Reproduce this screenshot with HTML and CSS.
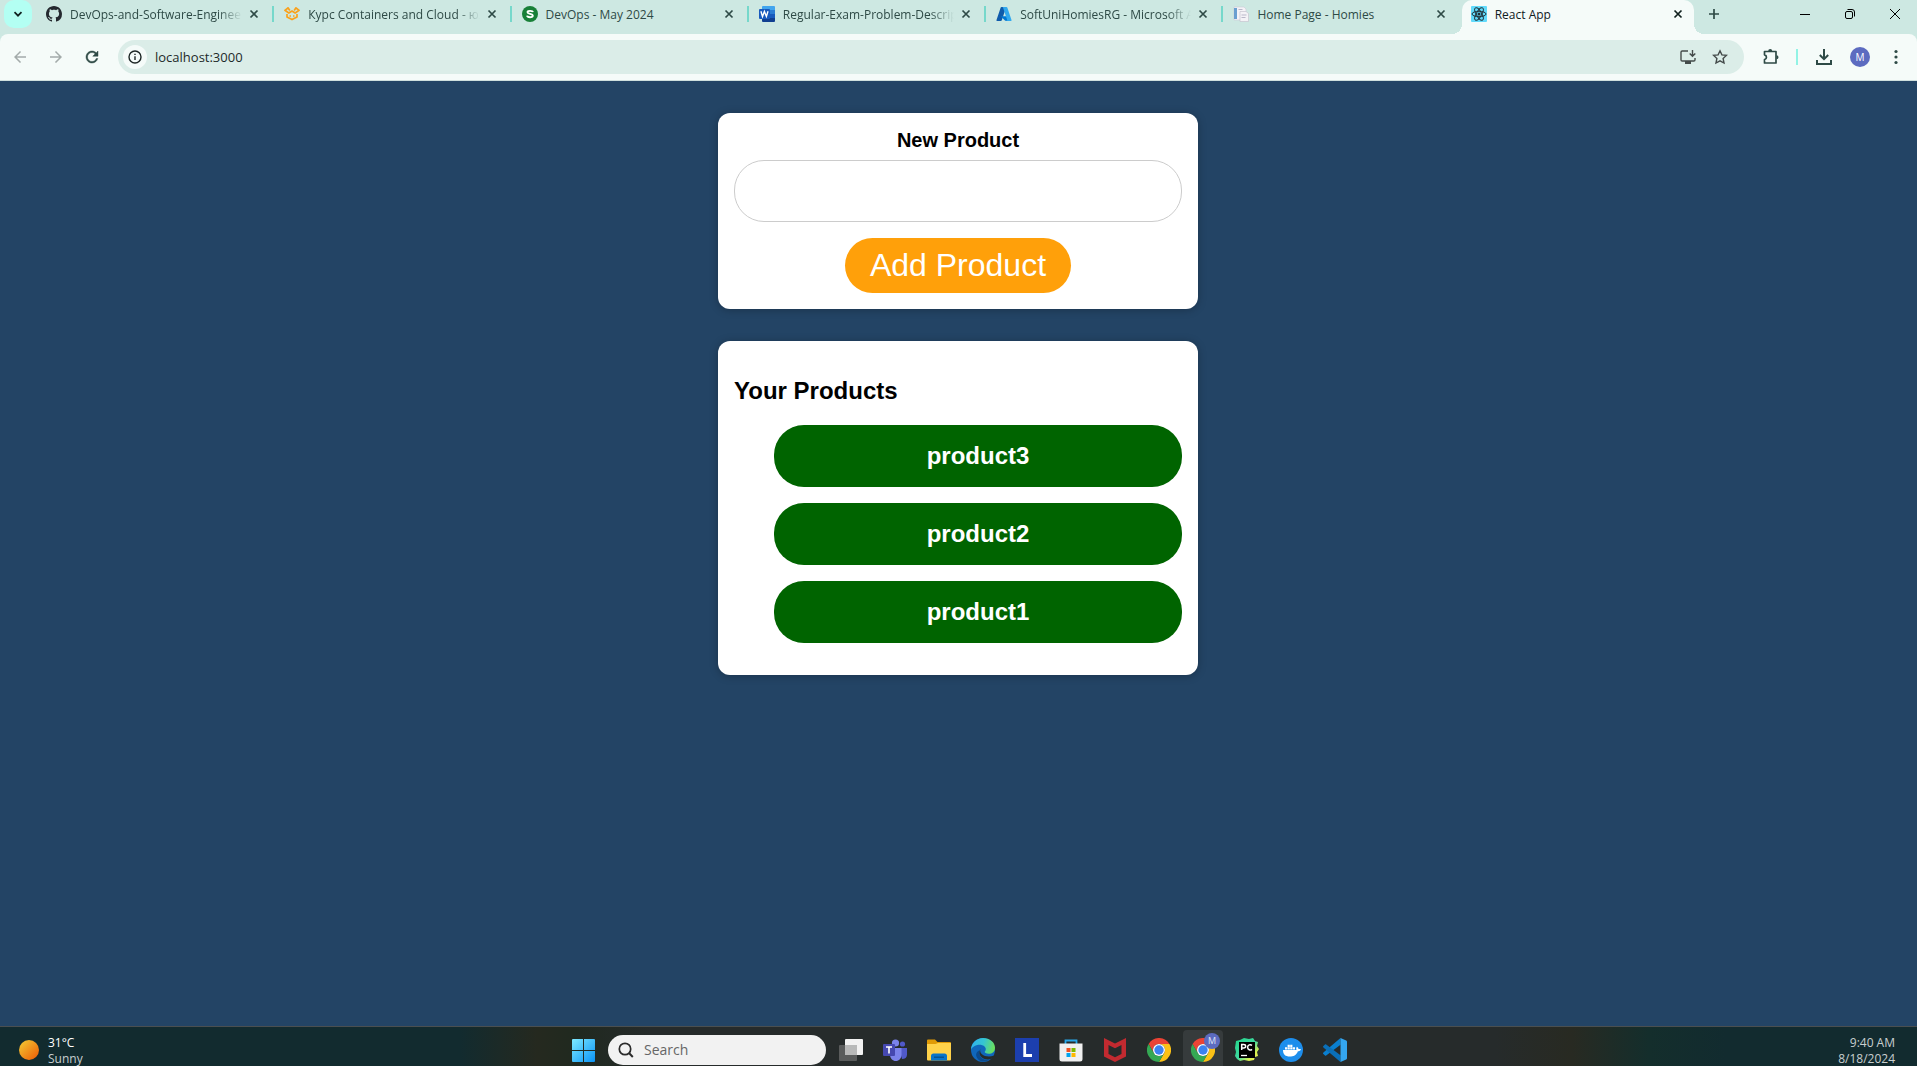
FILE: index.html
```html
<!DOCTYPE html>
<html lang="en">
<head>
<meta charset="utf-8">
<title>React App</title>
<link rel="stylesheet" href="styles.css">
</head>
<body>
<header class="browser">
  <div class="tabstrip">
    <button class="tab-search" aria-label="Search tabs"><svg width="12" height="12" viewBox="0 0 12 12"><path class="line bold" d="M2.500 4.200 6 7.700 9.500 4.200"/></svg></button>
    <nav class="tabs" aria-label="Tabs">
      <div class="tab">
        <button class="tab-main"><svg class="favicon" viewBox="0 0 16 16"><path fill="#24292f" d="M8 0C3.580 0 0 3.580 0 8c0 3.540 2.290 6.530 5.470 7.590.4.070.55-.17.55-.38 0-.19-.01-.82-.01-1.490-2.010.37-2.530-.49-2.690-.94-.09-.23-.48-.94-.82-1.130-.28-.15-.68-.52-.01-.53.63-.01 1.080.58 1.230.82.72 1.210 1.870.87 2.330.66.07-.52.28-.87.51-1.070-1.780-.2-3.640-.89-3.640-3.950 0-.87.31-1.590.82-2.150-.08-.2-.36-1.020.08-2.120 0 0 .67-.21 2.200.82.64-.18 1.320-.27 2-.27s1.360.09 2 .27c1.530-1.040 2.200-.82 2.200-.82.44 1.100.16 1.920.08 2.120.51.56.82 1.270.82 2.150 0 3.070-1.870 3.750-3.650 3.950.29.25.54.73.54 1.480 0 1.070-.01 1.930-.01 2.200 0 .21.15.46.55.38A8.010 8.010 0 0 0 16 8c0-4.420-3.580-8-8-8z"/></svg><span class="tab-title fade">DevOps-and-Software-Engineer</span></button>
        <button class="tab-close" aria-label="Close tab"><svg width="10" height="10" viewBox="0 0 10 10"><path class="line bold" d="M1.500 1.500l7 7m0-7l-7 7"/></svg></button>
      </div>
      <div class="tab">
        <button class="tab-main"><svg class="favicon" viewBox="0 0 16 16"><path fill="none" stroke="#f9a11b" stroke-width="1.700" stroke-linejoin="round" d="M5.800 4.500 4 1.800.9 4.300 4.800 7 8 5l3.200 2 3.900-2.700L12 1.800l-1.800 2.700M3 8v3L8 13.600 13 11V8M5.500 10h1.500M9 10h1.500"/></svg><span class="tab-title fade">Курс Containers and Cloud - юл</span></button>
        <button class="tab-close" aria-label="Close tab"><svg width="10" height="10" viewBox="0 0 10 10"><path class="line bold" d="M1.500 1.500l7 7m0-7l-7 7"/></svg></button>
      </div>
      <div class="tab">
        <button class="tab-main"><svg class="favicon" viewBox="0 0 16 16"><circle cx="8" cy="8" r="8" fill="#188038"/><path fill="none" stroke="#fff" stroke-width="1.900" d="M10.900 6.200C10.600 4.400 5.400 4.300 5.500 6.300c.1 2.100 5.300 1.200 5.300 3.500 0 2-5.400 2-5.700-.1"/></svg><span class="tab-title">DevOps - May 2024</span></button>
        <button class="tab-close" aria-label="Close tab"><svg width="10" height="10" viewBox="0 0 10 10"><path class="line bold" d="M1.500 1.500l7 7m0-7l-7 7"/></svg></button>
      </div>
      <div class="tab">
        <button class="tab-main"><svg class="favicon" viewBox="0 0 16 16"><path fill="#41a5ee" d="M4 0h11a1 1 0 0 1 1 1v3H3V1a1 1 0 0 1 1-1z"/><path fill="#2b7cd3" d="M3 4h13v4H3z"/><path fill="#185abd" d="M3 8h13v4H3z"/><path fill="#103f91" d="M3 12h13v3a1 1 0 0 1-1 1H4a1 1 0 0 1-1-1z"/><rect y="3" width="11" height="10" rx="1" fill="#185abd"/><path fill="none" stroke="#fff" stroke-width="1.400" d="M1.900 5.200 3.500 10.500 5.400 5.500 7.400 10.500 9 5.200"/></svg><span class="tab-title fade">Regular-Exam-Problem-Descrip</span></button>
        <button class="tab-close" aria-label="Close tab"><svg width="10" height="10" viewBox="0 0 10 10"><path class="line bold" d="M1.500 1.500l7 7m0-7l-7 7"/></svg></button>
      </div>
      <div class="tab">
        <button class="tab-main"><svg class="favicon" viewBox="0 0 16 16"><path fill="#0f5bab" d="M5.500 1h4.700L5.700 14.500c-.1.300-.4.500-.8.500H1.200c-.5 0-.9-.5-.7-1L4.700 1.600c.1-.4.400-.6.8-.6z"/><path fill="#0078d4" d="M11.500 10.200H4.700l4.500 4.500 3.800.3z"/><path fill="#32a9ee" d="M6.200 1h4.300c.4 0 .7.200.8.600L15.500 14c.2.500-.2 1-.7 1h-4.300c.5 0 .9-.5.700-1L7 1.600C6.900 1.200 6.600 1 6.200 1z"/></svg><span class="tab-title fade">SoftUniHomiesRG - Microsoft A</span></button>
        <button class="tab-close" aria-label="Close tab"><svg width="10" height="10" viewBox="0 0 10 10"><path class="line bold" d="M1.500 1.500l7 7m0-7l-7 7"/></svg></button>
      </div>
      <div class="tab">
        <button class="tab-main"><svg class="favicon" viewBox="0 0 16 16"><path fill="#f5f3f7" stroke="#cfcdd8" stroke-width=".7" d="M1 1h10l2 2v11H1z"/><path fill="#6a9fd0" d="M1 2h3v11H1z"/><path fill="#f4f2f6" stroke="#c6c4d0" stroke-width=".7" d="M7 5.500h6l2.500 2V15.500H7z"/><path stroke="#b9b7c9" d="M8.500 9h5M8.500 11.500h4M5.500 3.500h4"/></svg><span class="tab-title">Home Page - Homies</span></button>
        <button class="tab-close" aria-label="Close tab"><svg width="10" height="10" viewBox="0 0 10 10"><path class="line bold" d="M1.500 1.500l7 7m0-7l-7 7"/></svg></button>
      </div>
      <div class="tab active">
        <button class="tab-main"><svg class="favicon" viewBox="0 0 16 16"><rect width="16" height="16" rx="1" fill="#61dafb"/><g fill="none" stroke="#20323a"><ellipse cx="8" cy="8" rx="7" ry="2.700"/><ellipse cx="8" cy="8" rx="7" ry="2.700" transform="rotate(60 8 8)"/><ellipse cx="8" cy="8" rx="7" ry="2.700" transform="rotate(120 8 8)"/></g><circle cx="8" cy="8" r="1.500" fill="#20323a"/></svg><span class="tab-title">React App</span></button>
        <button class="tab-close" aria-label="Close tab"><svg width="10" height="10" viewBox="0 0 10 10"><path class="line bold" d="M1.500 1.500l7 7m0-7l-7 7"/></svg></button>
      </div>
    </nav>
    <button class="new-tab" aria-label="New tab"><svg width="12" height="12" viewBox="0 0 12 12"><path class="line bold" d="M6 1v10M1 6h10"/></svg></button>
    <div class="window-buttons">
      <button aria-label="Minimize"><svg width="12" height="12" viewBox="0 0 12 12"><path class="line" d="M1 6.500h10"/></svg></button>
      <button aria-label="Restore"><svg width="12" height="12" viewBox="0 0 12 12"><rect class="line" x="1.500" y="3.500" width="7" height="7" rx="1.500"/><path class="line" d="M3.500 1.500H8A2.500 2.500 0 0 1 10.500 4v4.500"/></svg></button>
      <button aria-label="Close"><svg width="12" height="12" viewBox="0 0 12 12"><path class="line" d="M1 1l10 10M11 1 1 11"/></svg></button>
    </div>
  </div>
  <div class="toolbar">
    <button class="tool dim" aria-label="Back"><svg width="18" height="18" viewBox="0 0 24 24"><path fill="currentColor" d="M20 11H7.800l5.600-5.600L12 4l-8 8 8 8 1.400-1.400L7.800 13H20z"/></svg></button>
    <button class="tool dim" aria-label="Forward"><svg width="18" height="18" viewBox="0 0 24 24"><path fill="currentColor" d="M4 11h12.200l-5.600-5.600L12 4l8 8-8 8-1.400-1.400 5.600-5.600H4z"/></svg></button>
    <button class="tool" aria-label="Reload"><svg width="18" height="18" viewBox="0 0 24 24"><path fill="currentColor" stroke="currentColor" stroke-width=".6" d="M17.650 6.350C16.200 4.900 14.210 4 12 4c-4.420 0-7.990 3.580-7.990 8s3.570 8 7.990 8c3.730 0 6.840-2.550 7.730-6h-2.080c-.82 2.330-3.040 4-5.650 4-3.310 0-6-2.690-6-6s2.690-6 6-6c1.660 0 3.140.69 4.220 1.780L13 11h7V4z"/></svg></button>
    <div class="omnibox">
      <button class="site-info" aria-label="View site information"><svg width="14" height="14" viewBox="0 0 14 14"><circle class="line semi" cx="7" cy="7" r="6"/><path class="line semi" d="M7 6.300v3.700M7 3.800v1.300"/></svg></button>
      <input class="address" type="text" aria-label="Address" value="localhost:3000" spellcheck="false">
      <button class="tool grey" aria-label="Install app"><svg width="18" height="16" viewBox="0 0 18 16"><path class="line semi" d="M9 2H3.200A1.200 1.200 0 0 0 2 3.200v7.600A1.200 1.200 0 0 0 3.200 12h11.600a1.200 1.200 0 0 0 1.200-1.200V9M13.500 1v6M10.700 4.500l2.800 2.800 2.800-2.800"/><path fill="currentColor" d="M6 12h6v3H6z"/></svg></button>
      <button class="tool grey" aria-label="Bookmark this tab"><svg width="16" height="16" viewBox="0 0 16 16"><path class="line semi" d="M8 1.800l1.900 4.100 4.500.5-3.300 3.100.9 4.500L8 11.800 4 14l.9-4.500L1.600 6.400l4.500-.5z"/></svg></button>
    </div>
    <div class="actions">
      <button class="tool" aria-label="Extensions"><svg width="18" height="18" viewBox="-1 0 18 18"><path class="line bold" stroke-linejoin="round" d="M2.500 3.500H14V15H2.500v-3.300c2.600-.6 2.600-4.300 0-4.900z"/><path fill="currentColor" d="M6.200 3a2 2 0 0 1 4 0zM14.500 7.200a2 2 0 0 1 0 4z"/></svg></button>
      <span class="divider"></span>
      <button class="tool" aria-label="Downloads"><svg width="18" height="18" viewBox="0 0 18 18"><path class="line heavy" d="M9 1v10M4.800 7 9 11.200 13.200 7M2 12v4h14v-4"/></svg></button>
      <button class="tool" aria-label="Profile"><span class="avatar">M</span></button>
      <button class="tool" aria-label="Menu"><svg width="4" height="16" viewBox="0 0 4 16"><g fill="currentColor"><circle cx="2" cy="2.500" r="1.600"/><circle cx="2" cy="8" r="1.600"/><circle cx="2" cy="13.500" r="1.600"/></g></svg></button>
    </div>
  </div>
</header>

<main class="page">
  <form class="card product-form">
    <label class="form-label" for="product-name">New Product</label>
    <input class="product-input" id="product-name" type="text">
    <button class="add-button" type="button">Add Product</button>
  </form>
  <section class="card">
    <h2 class="list-title">Your Products</h2>
    <ul class="product-list">
      <li class="product">product3</li>
      <li class="product">product2</li>
      <li class="product">product1</li>
    </ul>
  </section>
</main>

<footer class="taskbar">
  <div class="weather">
    <span class="sun"></span>
    <p class="stack"><span class="bright">31°C</span><span>Sunny</span></p>
  </div>
  <div class="apps">
    <button class="app" aria-label="Start"><svg width="23" height="23" viewBox="0 0 23 23"><defs><linearGradient id="win" x1="0" y1="0" x2="1" y2="1"><stop offset="0" stop-color="#7eeaff"/><stop offset="1" stop-color="#0a93f5"/></linearGradient></defs><path fill="url(#win)" d="M0 1a1 1 0 0 1 1-1h10v11H0zM12 0h10a1 1 0 0 1 1 1v10H12zM0 12h11v11H1a1 1 0 0 1-1-1zM12 12h11v10a1 1 0 0 1-1 1H12z"/></svg></button>
    <label class="search"><svg width="16" height="16" viewBox="0 0 16 16"><circle class="line bold" cx="7" cy="7" r="5.700"/><path class="line heavy" d="M11 11l3.800 4"/></svg><input class="search-input" type="text" placeholder="Search" aria-label="Search"></label>
    <div class="pinned">
      <button class="app" aria-label="Task view"><svg width="24" height="22" viewBox="0 0 24 22"><rect x="6" width="18" height="16" rx="1" fill="#f2f2f2"/><rect y="6" width="18" height="16" rx="1" fill="#5a5c5c"/><path fill="#b8b9b9" d="M6 6h12v10H6z"/></svg></button>
      <button class="app" aria-label="Teams"><svg width="24" height="22" viewBox="0 0 24 22"><circle cx="19.500" cy="5" r="2.600" fill="#5059c9"/><path fill="#5059c9" d="M16 9h8v6.500c0 3-2 4.500-5 4.500z"/><circle cx="12.500" cy="4" r="3.600" fill="#7b83eb"/><path fill="#7b83eb" d="M7 9h11.500v6.500c0 4-2.500 6.500-5.700 6.500S7 19.500 7 15.500z"/><rect y="5" width="12" height="12" rx="1" fill="#4548b0"/><path fill="none" stroke="#fff" stroke-width="1.600" d="M3 8h6M6 8v6.500"/></svg></button>
      <button class="app" aria-label="File Explorer"><svg width="24" height="22" viewBox="0 0 24 22"><path fill="#e09a06" d="M0 1.500A1 1 0 0 1 1 .500h7L10.500 3H23a1 1 0 0 1 1 1v5H0z"/><path fill="#ffd24a" d="M0 5h8.500L11 4h13v16.500a1 1 0 0 1-1 1H1a1 1 0 0 1-1-1z"/><path fill="#0a74c9" d="M4 21.500V17a2.500 2.500 0 0 1 2.500-2.500h11A2.500 2.500 0 0 1 20 17v4.500z"/><path stroke="#044c86" stroke-width="1.200" d="M7 18.200h10"/></svg></button>
      <button class="app" aria-label="Edge"><svg width="24" height="24" viewBox="0 0 24 24"><defs><linearGradient id="edge-top" x1="0" y1=".3" x2="1" y2=".5"><stop offset="0" stop-color="#2fb1ee"/><stop offset=".5" stop-color="#35c6d2"/><stop offset="1" stop-color="#6ce05a"/></linearGradient></defs><circle cx="12" cy="12" r="12" fill="#1067bb"/><path fill="url(#edge-top)" d="M0 12C0 5 5.500 0 12 0c7 0 12 4.500 12 9.700 0 4-3 6-6.300 6-2.700 0-4-.8-4-1.600 0-.7 1.100-1.200 1.100-3C14.800 9 12 6.800 8.800 6.800 4 6.800.700 9.500 0 12z"/><path fill="#0b4a8d" d="M8.200 12.500c-.8 6.500 5 11.500 11 8.600C16.600 23.600 11 25 7.300 21.500c-3.600-3.500-2.300-8 .9-9z"/><path fill="#262b2b" d="M9.300 10.900c-1.300 5 4.800 9.100 13.200 6.900 1.200-.4.900.4.300 1.200-1 1.400-2.400 2-3.600 2.100-6 1.600-13.500-3.300-9.900-10.200z"/></svg></button>
      <button class="app" aria-label="L"><svg width="24" height="24" viewBox="0 0 24 24"><path fill="#1c3fae" d="M0 0h24v24H0z"/><path fill="none" stroke="#fff" stroke-width="2.800" d="M9.700 5v12.500H17"/></svg></button>
      <button class="app" aria-label="Microsoft Store"><svg width="24" height="24" viewBox="0 0 24 24"><path fill="none" stroke="#28a8ea" stroke-width="1.800" d="M6.500 8V2.500h11V8"/><path fill="#f0f0f0" d="M.500 5.500h23V21a2.500 2.500 0 0 1-2.500 2.500H3A2.500 2.500 0 0 1 .500 21z"/><path fill="#f25022" d="M7.500 10h4v4h-4z"/><path fill="#7fba00" d="M12.500 10h4v4h-4z"/><path fill="#00a4ef" d="M7.500 15h4v4h-4z"/><path fill="#ffb900" d="M12.500 15h4v4h-4z"/></svg></button>
      <button class="app" aria-label="McAfee"><svg width="24" height="24" viewBox="0 0 24 24"><path fill="#c22a30" d="M1 0l11 5.500L23 0v18.500L12 24 1 18.500z"/><path fill="#262b2b" d="M5.500 7l6.500 3.300L18.500 7v9L12 19.300 5.500 16z"/></svg></button>
      <button class="app" aria-label="Chrome"><svg width="24" height="24" viewBox="0 0 24 24"><g id="chrome-logo"><path fill="#ea4335" d="M1.600 6A12 12 0 0 1 22.400 6H12a6 6 0 0 0-5.200 9z"/><path fill="#fbc116" d="M22.400 6A12 12 0 0 1 12 24l5.200-9A6 6 0 0 0 12 6z"/><path fill="#34a853" d="M12 24A12 12 0 0 1 1.600 6l5.200 9a6 6 0 0 0 10.400 0z"/><circle cx="12" cy="12" r="6" fill="#fff"/><circle cx="12" cy="12" r="4.700" fill="#3b82f0"/></g></svg></button>
      <button class="app open" aria-label="Chrome, React App"><svg width="24" height="24" viewBox="0 0 24 24"><use href="#chrome-logo"/></svg><span class="badge">M</span></button>
      <button class="app" aria-label="PyCharm"><svg width="24" height="24" viewBox="0 0 24 24"><defs><linearGradient id="pc" x1="0" y1="0" x2="1" y2="1"><stop offset="0" stop-color="#21d789"/><stop offset=".5" stop-color="#3fd8a0"/><stop offset=".75" stop-color="#d8f04f"/><stop offset="1" stop-color="#f5ee5a"/></linearGradient></defs><path fill="url(#pc)" d="M1 3l4-1 4-2 5 1 4-1 2 3 3 1-1 4 2 3-2 3 1 4-3 1-1 3-5 1-5-1-4 1-3-2-2-3 1-4-1-4z"/><path d="M4 4h16v16H4z"/><path stroke="#fff" stroke-width="1.300" d="M6 17.500h6"/><path fill="none" stroke="#fff" stroke-width="1.500" d="M6.700 12V6.600h2c2.600 0 2.600 3.400 0 3.400h-2M17 7.300c-1.700-1.300-4.400-.500-4.400 2s2.700 3.400 4.400 2"/></svg></button>
      <button class="app" aria-label="Docker"><svg width="24" height="24" viewBox="0 0 24 24"><circle cx="12" cy="12" r="12" fill="#1d8eec"/><path fill="#fff" d="M4 12h13.500c-.5-1.200-.3-2.300.4-3.200 1 .6 1.500 1.300 1.600 2.200 1-.2 1.800-.1 2.500.4-.5 1.200-1.600 1.800-3.100 1.800-1.600 4-4.400 5.300-8.200 5.300C6.500 18.500 4 16.500 4 12zM6 9.300h2.200v2.200H6zM8.600 9.300h2.200v2.200H8.600zM11.200 9.300h2.200v2.200h-2.200zM13.800 9.300H16v2.200h-2.200zM8.600 6.700h2.200v2.200H8.600zM11.200 6.700h2.200v2.200h-2.200z"/></svg></button>
      <button class="app" aria-label="Visual Studio Code"><svg width="24" height="24" viewBox="0 0 24 24"><path fill="#0a7fcf" d="M17.500 0v6.700L3.200 17.500c-.4.300-.8.300-1.200 0L.400 16.100c-.5-.4-.5-1 0-1.500z"/><path fill="#0a6fb8" d="M17.500 24v-6.700L3.200 6.500c-.4-.3-.8-.3-1.200 0L.400 7.900c-.5.400-.5 1 0 1.500z"/><path fill="#34a6f0" d="M17.500 0l5.700 2.600c.5.200.8.700.8 1.200v16.400c0 .5-.3 1-.8 1.200L17.500 24z"/></svg></button>
    </div>
  </div>
  <p class="stack clock"><time>9:40 AM</time><time datetime="2024-08-18">8/18/2024</time></p>
</footer>
</body>
</html>
```

FILE: styles.css
```css
* {
  box-sizing: border-box;
}

:root {
  --strip: #cde8e2;
  --bar: #f5fbf9;
  --ink: #2e4a46;
  --ui-font: "Open Sans", "Noto Sans", sans-serif;
}

body {
  display: flex;
  flex-direction: column;
  min-height: 100vh;
  margin: 0;
  background: #234465;
  font-family: "Liberation Sans", Arial, sans-serif;
}

button {
  display: flex;
  align-items: center;
  justify-content: center;
  padding: 0;
  border: 0;
  background: none;
  color: inherit;
  font: inherit;
}

svg {
  display: block;
  flex: none;
}

.line {
  fill: none;
  stroke: currentColor;
  stroke-width: 1;
}

.semi {
  stroke-width: 1.4;
}

.bold {
  stroke-width: 1.7;
}

.heavy {
  stroke-width: 2;
}

/* Browser frame */
.browser {
  color: var(--ink);
  font-family: var(--ui-font);
}

.tabstrip {
  display: flex;
  height: 34px;
  padding-left: 4px;
  background: var(--strip);
}

.tab-search {
  width: 28px;
  height: 28px;
  margin-right: 6px;
  border-radius: 10px;
  background: #b3fff3;
  color: #10201e;
}

.tabs {
  display: flex;
  flex: 1;
  min-width: 0;
}

.tab {
  position: relative;
  display: flex;
  flex: 1 1 0;
  min-width: 0;
  height: 28px;
  align-items: center;
  padding-right: 13px;
}

.tab::after {
  content: "";
  position: absolute;
  top: 6px;
  right: 1px;
  width: 2px;
  height: 16px;
  background: #76d8cb;
}

.tab:nth-last-child(2)::after {
  display: none;
}

.tab-main {
  flex: 1;
  min-width: 0;
  gap: 8px;
  height: 28px;
  padding-left: 8px;
}

.tab + .tab .tab-main {
  padding-left: 9px;
}

.favicon {
  width: 16px;
  height: 16px;
}

.tab-title {
  flex: 1;
  min-width: 0;
  padding-top: 2px;
  overflow: hidden;
  text-align: left;
  white-space: nowrap;
  font-size: 12px;
  line-height: 20px;
}

.fade {
  -webkit-mask-image: linear-gradient(to left, transparent, #000 24px);
  mask-image: linear-gradient(to left, transparent, #000 24px);
}

.tab-close {
  width: 16px;
  height: 16px;
  margin-left: 4px;
}

.tab.active {
  height: 34px;
  margin-right: 6px;
  padding-right: 8px;
  padding-bottom: 6px;
  border-radius: 10px 10px 0 0;
  background: var(--bar);
  color: #10201e;
}

.tab.active::before,
.tab.active::after {
  content: "";
  position: absolute;
  top: auto;
  bottom: 0;
  width: 10px;
  height: 10px;
}

.tab.active::before {
  right: 100%;
  background: radial-gradient(circle at 0 0, transparent 10px, var(--bar) 10px);
}

.tab.active::after {
  right: auto;
  left: 100%;
  background: radial-gradient(circle at 100% 0, transparent 10px, var(--bar) 10px);
}

.new-tab {
  width: 28px;
  height: 28px;
  margin-right: 54px;
}

.window-buttons {
  display: flex;
  color: #000;
}

.window-buttons button {
  width: 45px;
  height: 28px;
}

.toolbar {
  display: flex;
  align-items: center;
  gap: 8px;
  height: 47px;
  padding: 0 7px 0 6px;
  border-bottom: 1px solid #cfdfdd;
  border-radius: 8px 8px 0 0;
  background: var(--bar);
  box-shadow: 0 -8px 0 0 var(--strip);
}

.tool {
  width: 28px;
  height: 28px;
}

.dim {
  color: #a3abaa;
}

.grey {
  color: #444b4a;
}

.omnibox {
  display: flex;
  flex: 1;
  align-items: center;
  gap: 4px;
  height: 34px;
  margin: 0 4px;
  padding: 0 10px 0 5px;
  border-radius: 17px;
  background: #dbede8;
}

.site-info {
  width: 24px;
  height: 24px;
  border-radius: 50%;
  background: var(--bar);
  color: #1d2625;
}

.address {
  flex: 1;
  min-width: 0;
  padding: 0 4px;
  border: 0;
  outline: 0;
  background: none;
  color: #1d2a29;
  font: 13px/20px var(--ui-font);
}

.actions {
  display: flex;
  align-items: center;
  gap: 8px;
}

.divider {
  width: 2px;
  height: 16px;
  margin: 0 4px;
  background: #92f3e5;
}

.avatar {
  width: 20px;
  height: 20px;
  border-radius: 50%;
  background: #5c6bc0;
  color: #fff;
  font-size: 10px;
  line-height: 20px;
}

/* Product page */
.page {
  display: flex;
  flex: 1;
  flex-direction: column;
  align-items: center;
  gap: 32px;
  padding: 32px 17px 32px 16px;
}

.card {
  width: 100%;
  max-width: 480px;
  padding: 16px;
  border-radius: 12px;
  background: #fff;
  box-shadow: 0 1px 8px rgba(0, 0, 0, 0.25);
}

.product-form {
  display: flex;
  flex-direction: column;
  align-items: center;
}

.form-label {
  margin-bottom: 8px;
  font-size: 20px;
  font-weight: bold;
  line-height: 23px;
}

.product-input {
  width: 100%;
  height: 62px;
  margin-bottom: 16px;
  padding: 16px;
  border: 1px solid #ccc;
  border-radius: 30px;
  outline: 0;
  background: #fff;
  font: 24px/28px "Liberation Sans", Arial, sans-serif;
}

.add-button {
  height: 55px;
  padding: 0 25px;
  border-radius: 28px;
  background: #ffa00a;
  color: #fff;
  font-size: 32px;
  line-height: 37px;
}

.list-title {
  margin: 20px 0;
  font-size: 24px;
  line-height: 28px;
}

.product-list {
  display: grid;
  gap: 16px;
  margin: 0 0 16px;
  padding-left: 40px;
  list-style: none;
}

.product {
  padding: 17px;
  border-radius: 30px;
  background: #006400;
  color: #fff;
  font-size: 24px;
  font-weight: bold;
  line-height: 28px;
  text-align: center;
}

/* Taskbar */
.taskbar {
  display: grid;
  grid-template-columns: 1fr auto 1fr;
  height: 40px;
  padding: 3px 22px 0 19px;
  border-top: 1px solid #4a4f50;
  overflow: hidden;
  background: linear-gradient(90deg, #122b2f 0 24%, #25291f 28%, #20291f 30%, #262b2b 34% 78%, #282a22 82%, #142e2c 86%, #122b2f 90%);
  color: #c8cfcf;
  font-family: var(--ui-font);
}

.weather {
  display: flex;
  align-items: center;
  gap: 9px;
  height: 40px;
}

.sun {
  width: 20px;
  height: 20px;
  border-radius: 50%;
  background: linear-gradient(135deg, #f2c230 10%, #ee6a0c 85%);
}

.stack {
  display: flex;
  flex-direction: column;
  margin: 0;
  padding-top: 1px;
  font-size: 12px;
  line-height: 16px;
}

.bright {
  color: #fff;
}

.clock {
  padding-top: 5px;
  text-align: right;
}

.apps {
  display: flex;
  padding-left: 4px;
}

.app {
  position: relative;
  width: 40px;
  height: 40px;
}

.open {
  border-radius: 4px;
  background: #363b3c;
}

.badge {
  position: absolute;
  top: 3px;
  right: 3px;
  width: 16px;
  height: 16px;
  border-radius: 50%;
  background: #5c6bc0;
  color: #dfe3f8;
  font-size: 9px;
  line-height: 16px;
}

.search {
  display: flex;
  width: 218px;
  height: 30px;
  align-items: center;
  gap: 10px;
  margin: 5px 5px 0;
  padding-left: 10px;
  border-radius: 15px;
  background: #f2f2f2;
  color: #2b2b2b;
}

.search-input {
  flex: 1;
  min-width: 0;
  padding: 0;
  border: 0;
  outline: 0;
  background: none;
  font: 14px/20px var(--ui-font);
}

.search-input::placeholder {
  color: #666;
}

.pinned {
  display: flex;
  gap: 4px;
}
```
